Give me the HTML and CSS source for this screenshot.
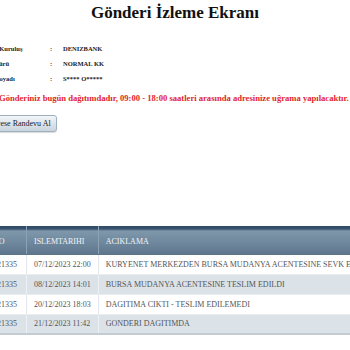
FILE: index.html
```html
<!DOCTYPE html>
<html lang="tr">
  <head>
    <meta charset="UTF-8" />
    <title>Gönderi İzleme Ekranı</title>
    <link rel="stylesheet" href="styles.css">
  </head>
  <body>
    <h1 class="title">Gönderi İzleme Ekranı</h1>
    <main class="page">
      <div class="info">
        <span class="info-label">Gönderen Kuruluş</span>
        <span class="info-sep">:</span>
        <span class="info-value">DENIZBANK</span>
        <span class="info-label">Gönderi Türü</span>
        <span class="info-sep">:</span>
        <span class="info-value">NORMAL KK</span>
        <span class="info-label">Alıcı Adı Soyadı</span>
        <span class="info-sep">:</span>
        <span class="info-value">S**** O*****</span>
      </div>

      <p class="notice">Gönderiniz bugün dağıtımdadır, 09:00 - 18:00 saatleri arasında adresinize uğrama yapılacaktır.</p>

      <div class="actions">
        <button class="btn" type="button">Adrese Randevu Al</button>
      </div>

      <table class="moves">
        <tr>
          <th class="col-no">TAKIPNO</th>
          <th class="col-date">ISLEMTARIHI</th>
          <th>ACIKLAMA</th>
        </tr>
        <tr>
          <td>51000021335</td>
          <td>07/12/2023 22:00</td>
          <td>KURYENET MERKEZDEN BURSA MUDANYA ACENTESINE SEVK EDILDI</td>
        </tr>
        <tr class="alt">
          <td>51000021335</td>
          <td>08/12/2023 14:01</td>
          <td>BURSA MUDANYA ACENTESINE TESLIM EDILDI</td>
        </tr>
        <tr>
          <td>51000021335</td>
          <td>20/12/2023 18:03</td>
          <td>DAGITIMA CIKTI - TESLIM EDILEMEDI</td>
        </tr>
        <tr class="alt">
          <td>51000021335</td>
          <td>21/12/2023 11:42</td>
          <td>GONDERI DAGITIMDA</td>
        </tr>
      </table>
    </main>
  </body>
</html>
```

FILE: styles.css
```css
* {
  box-sizing: border-box;
}

html,
body {
  margin: 0;
  width: 350px;
  height: 350px;
  overflow: hidden;
  background: #fff;
  font-family: "Liberation Serif", "Times New Roman", serif;
}

.title {
  margin: 0;
  padding-top: 3px;
  font-size: 17px;
  line-height: 20px;
  text-align: center;
  color: #111;
}

.page {
  margin-left: -34px;
  width: 520px;
}

.info {
  display: grid;
  grid-template-columns: 80px 13px auto;
  margin-top: 18px;
  padding-left: 4px;
  font-size: 6.5px;
  font-weight: bold;
  line-height: 15px;
  color: #222;
}

.notice {
  margin: 5px 0 0;
  padding-left: 33px;
  font-size: 8.6px;
  font-weight: bold;
  line-height: 14px;
  white-space: nowrap;
  color: #e3262d;
}

.actions {
  margin-top: 7px;
  padding-left: 16px;
}

.btn {
  height: 17px;
  padding: 0 5px;
  font-family: inherit;
  font-size: 8px;
  color: #222;
  border: 1px solid #9fb0bf;
  border-radius: 3px;
  background: linear-gradient(#f3f6f8, #dbe3ea 55%, #c9d4de);
  box-shadow: 0 1px 1px rgba(0, 0, 0, 0.15);
}

.moves {
  margin-top: 94px;
  margin-left: -1px;
  width: 620px;
  border-collapse: collapse;
  font-size: 8px;
  color: #555;
}

.moves th {
  height: 28px;
  padding: 3px 7px 0;
  text-align: left;
  font-weight: normal;
  color: #f2f5f8;
  border-left: 1px solid #8da2b4;
  border-bottom: 1px solid #5c7388;
  background: linear-gradient(#2f4863 0, #3a5571 3px, #7f97ab 5px, #6e879c 60%, #5d768b);
}

.moves th.col-no {
  padding-left: 4px;
}

.moves td {
  height: 20px;
  padding: 0 7px;
  border-left: 1px solid #e4e8ec;
  border-bottom: 1px solid #e9edf0;
  white-space: nowrap;
}

.moves tr.alt td {
  background: #dbe2e8;
  border-left-color: #eef1f4;
}

.moves tr:last-child td {
  border-bottom: 2px solid #c3cbd3;
}

.moves .col-no {
  width: 61px;
}

.moves .col-date {
  width: 71px;
}
```
